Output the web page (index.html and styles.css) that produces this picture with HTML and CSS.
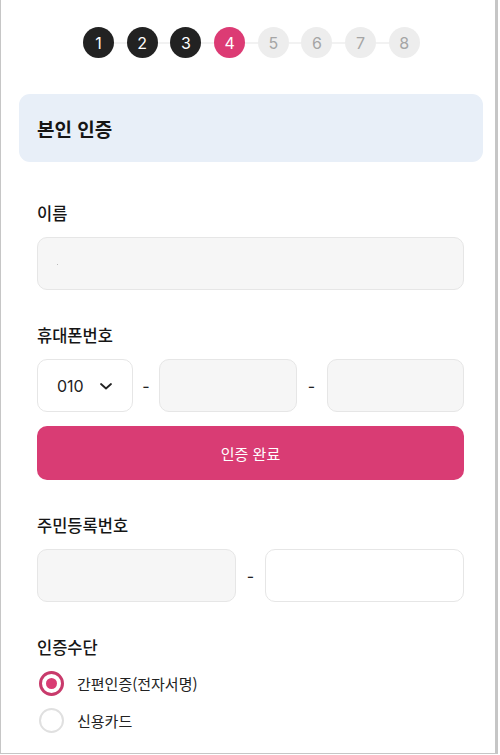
FILE: index.html
```html
<!DOCTYPE html>
<html lang="ko">
<head>
<meta charset="utf-8">
<title>본인 인증</title>
<link rel="stylesheet" href="styles.css">
</head>
<body>
<div class="frame">
  <div class="steps">
    <span class="step done">1</span><span class="line"></span>
    <span class="step done">2</span><span class="line"></span>
    <span class="step done">3</span><span class="line"></span>
    <span class="step active">4</span><span class="line"></span>
    <span class="step">5</span><span class="line"></span>
    <span class="step">6</span><span class="line"></span>
    <span class="step">7</span><span class="line"></span>
    <span class="step">8</span>
  </div>

  <div class="header">본인 인증</div>

  <div class="content">
    <div class="field first">
      <div class="label">이름</div>
      <div class="input gray"><span class="dot"></span></div>
    </div>

    <div class="field">
      <div class="label">휴대폰번호</div>
      <div class="phone-row">
        <div class="input select">
          <span class="sel-text">010</span>
          <svg class="chev" width="14" height="10" viewBox="0 0 14 10"><path d="M2 3 L7 7.5 L12 3" fill="none" stroke="#222" stroke-width="1.8" stroke-linecap="round" stroke-linejoin="round"/></svg>
        </div>
        <span class="dash">-</span>
        <div class="input gray"></div>
        <span class="dash">-</span>
        <div class="input gray"></div>
      </div>
      <button class="btn">인증 완료</button>
    </div>

    <div class="field">
      <div class="label">주민등록번호</div>
      <div class="rrn-row">
        <div class="input gray"></div>
        <span class="dash">-</span>
        <div class="input"></div>
      </div>
    </div>

    <div class="field">
      <div class="label">인증수단</div>
      <div class="radios">
        <div class="radio-row"><span class="radio checked"></span><span class="radio-text">간편인증(전자서명)</span></div>
        <div class="radio-row"><span class="radio"></span><span class="radio-text">신용카드</span></div>
      </div>
    </div>
  </div>
</div>
</body>
</html>
```

FILE: styles.css
```css
* { box-sizing: border-box; }
html, body { margin: 0; padding: 0; background: #fff; }
body {
  font-family: "Noto Sans CJK KR", "Noto Sans", sans-serif;
  color: #1a1a1a;
}
.frame {
  width: 498px;
  height: 754px;
  border-left: 1px solid #c6c6c6;
  border-right: 3px solid #c6c6c6;
  border-bottom: 1px solid #c6c6c6;
  overflow: hidden;
  background: #fff;
}
.steps {
  display: flex;
  align-items: center;
  padding-top: 27px;
  padding-left: 82px;
}
.step {
  width: 31px;
  height: 31px;
  border-radius: 50%;
  background: #ededed;
  color: #a5a5a5;
  display: flex;
  align-items: center;
  justify-content: center;
  font-family: "Inter", "Lato", sans-serif;
  font-size: 16px;
  font-weight: 400;
}
.step.done { background: #222; color: #fff; }
.step.active { background: #dc3b74; color: #fff; }
.line {
  width: 12.7px;
  height: 2px;
  background: #f2f2f2;
}
.header {
  margin: 36px 12px 0 18px;
  height: 68px;
  background: #e8eff8;
  border-radius: 11px;
  display: flex;
  align-items: center;
  padding-left: 18px;
  font-size: 19px;
  font-weight: 700;
  color: #151515;
}
.content {
  padding: 0 31px 0 36px;
}
.field { margin-top: 33px; }
.field.first { margin-top: 39px; }
.label {
  font-size: 16.5px;
  line-height: 24px;
  font-weight: 500;
  color: #161616;
  margin-bottom: 12px;
}
.input {
  height: 53px;
  border: 1px solid #e6e6e6;
  border-radius: 10px;
  background: #fff;
  position: relative;
}
.input.gray { background: #f6f6f6; }
.dot {
  position: absolute;
  left: 19px;
  top: 26px;
  width: 1px;
  height: 1px;
  background: #bbb;
}
.phone-row {
  display: grid;
  grid-template-columns: 96px 26px 1fr 30px 1fr;
  align-items: center;
}
.rrn-row {
  display: grid;
  grid-template-columns: 1fr 29px 1fr;
  align-items: center;
}
.dash {
  text-align: center;
  font-size: 16px;
  color: #222;
  font-family: "Inter", sans-serif;
}
.select {
  display: flex;
  align-items: center;
  justify-content: space-between;
  padding: 0 19px 0 19px;
}
.sel-text {
  font-family: "Inter", "Lato", sans-serif;
  font-size: 16px;
  color: #222;
}
.btn {
  display: block;
  width: 100%;
  height: 54px;
  margin-top: 14px;
  border: none;
  border-radius: 10px;
  background: #d93c74;
  color: #fff;
  font-family: "Noto Sans CJK KR", sans-serif;
  font-size: 15px;
  font-weight: 400;
}
.radios { margin-top: -6px; }
.radio-row {
  display: flex;
  align-items: center;
  height: 37px;
}
.radio {
  width: 25px;
  height: 25px;
  border-radius: 50%;
  border: 2px solid #e0e0e0;
  margin-left: 2px;
  margin-right: 13px;
  position: relative;
}
.radio.checked {
  border: 3px solid #c83a6b;
}
.radio.checked::after {
  content: "";
  position: absolute;
  left: 50%;
  top: 50%;
  width: 11px;
  height: 11px;
  margin: -5.5px 0 0 -5.5px;
  border-radius: 50%;
  background: #d93c74;
}
.radio-text {
  font-size: 15px;
  color: #222;
}
```
